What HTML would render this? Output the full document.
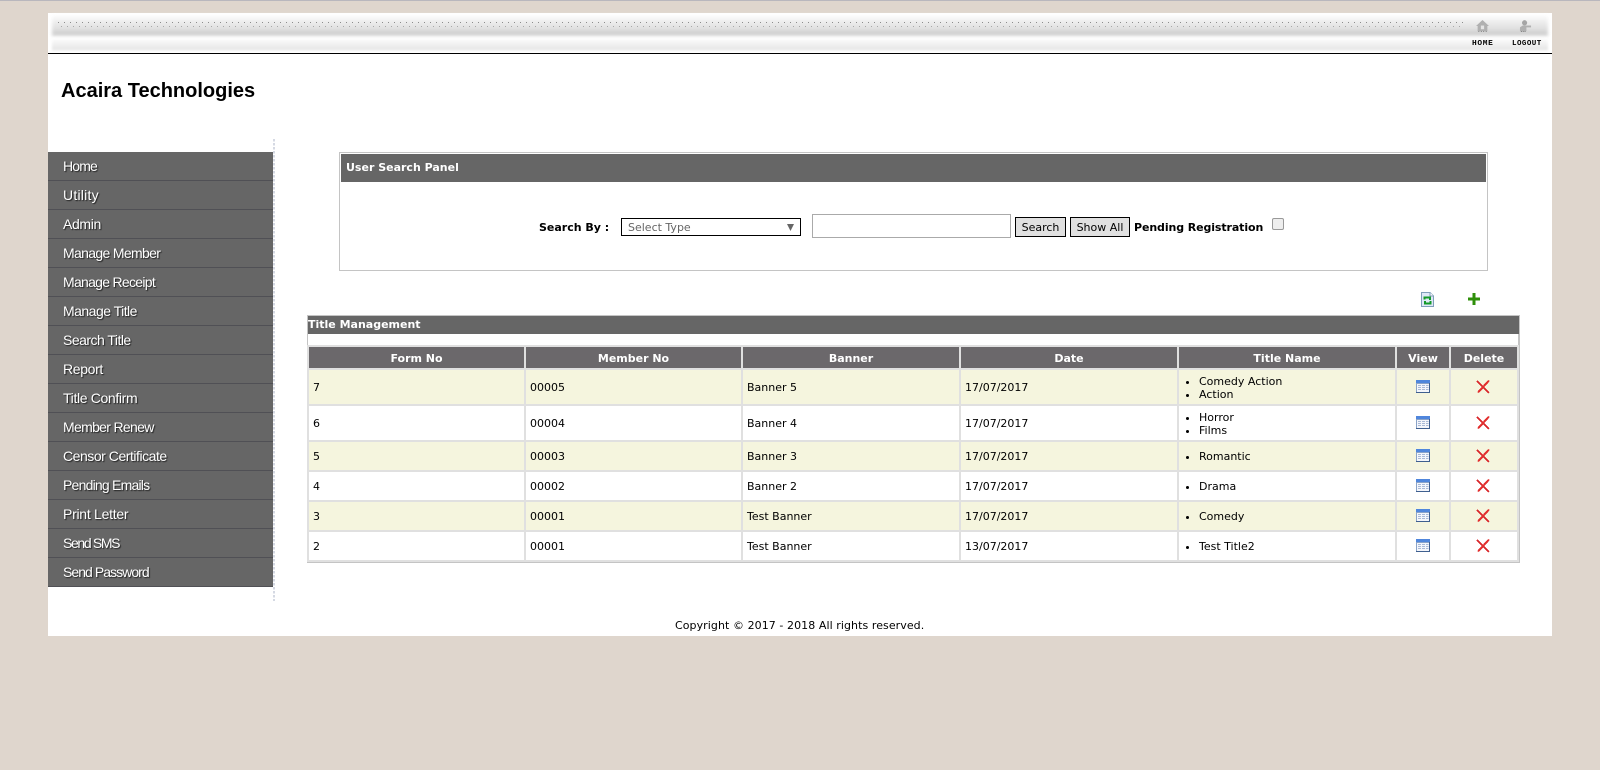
<!DOCTYPE html>
<html lang="en">
<head>
<meta charset="utf-8">
<title>Acaira Technologies</title>
<style>
html,body{margin:0;padding:0;width:1600px;height:770px;overflow:hidden;background:#dfd6cd;}
body{position:relative;font-family:"DejaVu Sans","Liberation Sans",sans-serif;font-size:11px;color:#000;}
div,span,a{position:absolute;display:block;box-sizing:border-box;white-space:nowrap;}
svg{position:absolute;display:block;}
.menu{left:48px;width:225px;height:29px;background:#666;border-bottom:1px solid #505055;color:#fff;font:14px/28px "Liberation Sans",sans-serif;padding-left:15px;text-shadow:1px 1px 1px #222;letter-spacing:-.35px;}
table{position:absolute;border-collapse:separate;border-spacing:2px;background:#e0e0e0;table-layout:fixed;font-size:11px;left:307px;top:345px;width:1212px;}
th{background:#6b686b;color:#fff;font-weight:bold;height:21px;padding:1px 0 0;box-sizing:border-box;font-size:11px;border:0;}
td{padding:0 0 0 4px;border:0;background:#fff;}
tr.a td{background:#f5f5de;}
tr.d2 td{height:34px;}
tr.d1 td{height:28px;}
ul{margin:0;padding:1px 0 0 16px;line-height:13px;}
td.c{padding:0;position:relative;}
</style>
</head>
<body>
<svg width="0" height="0" style="left:0;top:0"><defs>
<symbol id="v" viewBox="0 0 14 13"><rect width="14" height="13" fill="#3f5f8f"/><rect width="13" height="12" fill="#8aa3c8"/><rect width="14" height="3" fill="#4f86dc"/><rect x="1" y="4" width="12" height="8" fill="#f4f6fb"/><path d="M2 5.500h3M6 5.500h3M10 5.500h2.500M2 7.500h3M6 7.500h3M10 7.500h2.500M2 9.500h3M6 9.500h3M10 9.500h2.500" stroke="#a9b9d6"/></symbol>
<symbol id="x" viewBox="0 0 14 14"><path d="M1 1L13 13" stroke="#d9262a" stroke-width="1.500" shape-rendering="crispEdges"/><path d="M13 .5L2 12.500" stroke="#e2302f" stroke-width="2" shape-rendering="crispEdges"/></symbol>
</defs></svg>
<div style="left:0;top:0;width:1600px;height:1px;background:#b9b7bd"></div>
<div style="left:48px;top:13px;width:1504px;height:623px;background:#fff"></div>

<!-- header strip -->
<div style="left:48px;top:13px;width:1504px;height:40px;background:#fff"></div>
<div style="left:52px;top:15px;width:1496px;height:21px;background:linear-gradient(#fff 0,#f1f1f1 25%,#e0e0e0 65%,#cdcdcd 92%,#dcdcdc 100%);filter:blur(1.5px)"></div>
<div style="left:52px;top:38px;width:1496px;height:13px;background:linear-gradient(#fff 0,#f0f0f0 50%,#e6e6e6 90%,#fff 100%);filter:blur(1px)"></div>
<div style="left:58px;top:22px;width:1405px;height:6px;background-image:linear-gradient(#8c8c8c,#8c8c8c),linear-gradient(#9a9a9a,#9a9a9a);background-size:1px 1px,1px 1px;background-repeat:no-repeat"></div>
<div style="left:58px;top:22px;width:1405px;height:1px;background-image:linear-gradient(90deg,#8c8c8c 1px,transparent 1px);background-size:6px 1px"></div>
<div style="left:61px;top:26px;width:1402px;height:1px;background-image:linear-gradient(90deg,#a8a8a8 1px,transparent 1px);background-size:6px 1px"></div>
<div style="left:48px;top:53px;width:1504px;height:1px;background:#000"></div>

<svg style="left:1476px;top:20px" width="13" height="12" viewBox="0 0 16 13" preserveAspectRatio="none"><path d="M8 0 L16 6.500 L14 6.500 L14 12 L2 12 L2 6.500 L0 6.500 Z" fill="#b0b0b0"/><rect x="6" y="6" width="4" height="4" fill="#e4e4e4"/><path d="M3 12.500h10" stroke="#666" stroke-dasharray="1 2"/></svg>
<svg style="left:1519px;top:20px" width="13" height="12" viewBox="0 0 14 13"><circle cx="6" cy="3" r="2.800" fill="#a5a5a5"/><path d="M1 12 L1 8 L4 6 L13 6 L13 8 L8 8 L8 12 Z" fill="#b0b0b0"/><path d="M2 12.500h5" stroke="#666" stroke-dasharray="1 1"/></svg>
<div style="left:1472px;top:40px;font:bold 7.500px/9px 'Liberation Mono',monospace;letter-spacing:.6px;color:#000;transform:scaleX(1.05);transform-origin:0 0">HOME</div>
<div style="left:1512px;top:40px;font:bold 7.500px/9px 'Liberation Mono',monospace;letter-spacing:.45px;color:#000">LOGOUT</div>

<div style="left:61px;top:79px;font:bold 20px/24px 'Liberation Sans',sans-serif;color:#000">Acaira Technologies</div>

<!-- sidebar -->
<div style="left:273px;top:139px;width:2px;height:462px;background-image:linear-gradient(#d5d9e3 60%,#fff 60%);background-size:2px 4px"></div>
<div class="menu" style="top:152px;letter-spacing:-.85px">Home</div>
<div class="menu" style="top:181px;letter-spacing:.23px">Utility</div>
<div class="menu" style="top:210px">Admin</div>
<div class="menu" style="top:239px;letter-spacing:-.66px">Manage Member</div>
<div class="menu" style="top:268px;letter-spacing:-.71px">Manage Receipt</div>
<div class="menu" style="top:297px;letter-spacing:-.52px">Manage Title</div>
<div class="menu" style="top:326px;letter-spacing:-.52px">Search Title</div>
<div class="menu" style="top:355px">Report</div>
<div class="menu" style="top:384px">Title Confirm</div>
<div class="menu" style="top:413px;letter-spacing:-.68px">Member Renew</div>
<div class="menu" style="top:442px;letter-spacing:-.46px">Censor Certificate</div>
<div class="menu" style="top:471px;letter-spacing:-.78px">Pending Emails</div>
<div class="menu" style="top:500px;letter-spacing:-.27px">Print Letter</div>
<div class="menu" style="top:529px;letter-spacing:-1.35px">Send SMS</div>
<div class="menu" style="top:558px;letter-spacing:-.95px">Send Password</div>

<!-- search panel -->
<div style="left:339px;top:152px;width:1149px;height:119px;border:1px solid #c4c4c4;background:#fff"></div>
<div style="left:341px;top:154px;width:1145px;height:28px;background:#666;color:#fff;font-weight:bold;line-height:27px;padding-left:5px">User Search Panel</div>
<div style="left:539px;top:221px;font-weight:bold;line-height:14px">Search By :</div>
<div style="left:621px;top:218px;width:180px;height:18px;border:1px solid #000;background:#fff;color:#666;line-height:17px;padding-left:6px">Select Type</div>
<svg style="left:787px;top:224px" width="7" height="7" viewBox="0 0 7 7"><path d="M0 0H7L3.500 7Z" fill="#666"/></svg>
<div style="left:812px;top:214px;width:199px;height:24px;border:1px solid #aaa;background:#fff"></div>
<div style="left:1015px;top:217px;width:51px;height:20px;border:1px solid #000;background:#e0e0e0;text-align:center;line-height:19px">Search</div>
<div style="left:1070px;top:217px;width:60px;height:20px;border:1px solid #000;background:#e0e0e0;text-align:center;line-height:19px">Show All</div>
<div style="left:1134px;top:221px;font-weight:bold;line-height:14px;letter-spacing:-.1px">Pending Registration</div>
<div style="left:1272px;top:218px;width:12px;height:12px;border:1px solid #999;border-radius:2px;background:#eee"></div>

<!-- toolbar icons -->
<svg style="left:1421px;top:292px" width="13" height="15" viewBox="0 0 13 15"><path d="M.5.5H9L12.500 4V14.500H.5Z" fill="#dfe8f7" stroke="#7f9db9"/><path d="M9 .5V4H12.500" fill="#fff" stroke="#7f9db9"/><path d="M3.500 7.500V5.500H9V8M9.500 9V11.500H4V9" fill="none" stroke="#149a2a" stroke-width="2"/></svg>
<svg style="left:1468px;top:293px" width="12" height="12" viewBox="0 0 12 12"><path d="M4.500 0H7.500V4.500H12V7.500H7.500V12H4.500V7.500H0V4.500H4.500Z" fill="#2f8f0a"/></svg>

<!-- title management -->
<div style="left:307px;top:315px;width:1213px;height:248px;border:1px solid #c4c4c4;border-width:1px 2px 2px 1px;background:#fff"></div>
<div style="left:308px;top:316px;width:1211px;height:18px;background:#666;color:#fff;font-weight:bold;line-height:17px;padding-left:0">Title Management</div>

<table>
<colgroup><col style="width:215px"><col style="width:215px"><col style="width:216px"><col style="width:216px"><col style="width:216px"><col style="width:52px"><col style="width:66px"></colgroup>
<tr><th>Form No</th><th>Member No</th><th>Banner</th><th>Date</th><th>Title Name</th><th>View</th><th>Delete</th></tr>
<tr class="a d2"><td>7</td><td>00005</td><td>Banner 5</td><td>17/07/2017</td><td><ul><li>Comedy Action</li><li>Action</li></ul></td><td class="c"><svg style="left:19px;top:10px" width="14" height="13"><use href="#v"/></svg></td><td class="c"><svg style="left:25px;top:10px" width="14" height="14"><use href="#x"/></svg></td></tr>
<tr class="d2"><td>6</td><td>00004</td><td>Banner 4</td><td>17/07/2017</td><td><ul><li>Horror</li><li>Films</li></ul></td><td class="c"><svg style="left:19px;top:10px" width="14" height="13"><use href="#v"/></svg></td><td class="c"><svg style="left:25px;top:10px" width="14" height="14"><use href="#x"/></svg></td></tr>
<tr class="a d1"><td>5</td><td>00003</td><td>Banner 3</td><td>17/07/2017</td><td><ul><li>Romantic</li></ul></td><td class="c"><svg style="left:19px;top:7px" width="14" height="13"><use href="#v"/></svg></td><td class="c"><svg style="left:25px;top:7px" width="14" height="14"><use href="#x"/></svg></td></tr>
<tr class="d1"><td>4</td><td>00002</td><td>Banner 2</td><td>17/07/2017</td><td><ul><li>Drama</li></ul></td><td class="c"><svg style="left:19px;top:7px" width="14" height="13"><use href="#v"/></svg></td><td class="c"><svg style="left:25px;top:7px" width="14" height="14"><use href="#x"/></svg></td></tr>
<tr class="a d1"><td>3</td><td>00001</td><td>Test Banner</td><td>17/07/2017</td><td><ul><li>Comedy</li></ul></td><td class="c"><svg style="left:19px;top:7px" width="14" height="13"><use href="#v"/></svg></td><td class="c"><svg style="left:25px;top:7px" width="14" height="14"><use href="#x"/></svg></td></tr>
<tr class="d1"><td>2</td><td>00001</td><td>Test Banner</td><td>13/07/2017</td><td><ul><li>Test Title2</li></ul></td><td class="c"><svg style="left:19px;top:7px" width="14" height="13"><use href="#v"/></svg></td><td class="c"><svg style="left:25px;top:7px" width="14" height="14"><use href="#x"/></svg></td></tr>
</table>

<div style="left:675px;top:619px;line-height:14px;letter-spacing:.07px">Copyright © 2017 - 2018 All rights reserved.</div>
</body>
</html>
